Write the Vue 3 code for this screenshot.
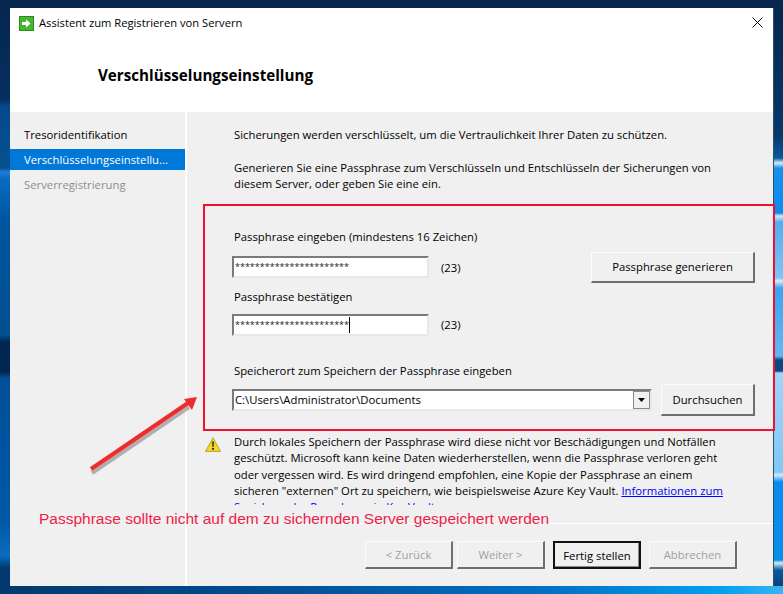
<script setup>
const steps = [
  { label: 'Tresoridentifikation', state: 'done' },
  { label: 'Verschlüsselungseinstellu...', state: 'active' },
  { label: 'Serverregistrierung', state: 'off' }
]
</script>

<template>
  <div class="desktop">
    <div class="window">
      <header class="head">
        <div class="titlebar">
          <svg class="appicon" width="15" height="15" viewBox="0 0 15 15">
            <rect x="0.5" y="0.5" width="14" height="14" fill="#46b52f" stroke="#2b8a1d" />
            <path d="M3 6h4V3.5L11.5 7.5 7 11.5V9H3z" fill="#fff" />
          </svg>
          <span class="title">Assistent zum Registrieren von Servern</span>
          <svg class="close" width="11" height="11" viewBox="0 0 11 11">
            <path d="M0.5 0.5L10.5 10.5M10.5 0.5L0.5 10.5" stroke="#000" stroke-width="1" fill="none" />
          </svg>
        </div>
        <h1 class="heading">Verschlüsselungseinstellung</h1>
      </header>

      <div class="body">
        <nav class="side">
          <div v-for="s in steps" :key="s.label" class="step" :class="s.state">{{ s.label }}</div>
        </nav>

        <main class="main">
          <div class="content">
            <p class="p1">Sicherungen werden verschlüsselt, um die Vertraulichkeit Ihrer Daten zu schützen.</p>
            <p class="p2">Generieren Sie eine Passphrase zum Verschlüsseln und Entschlüsseln der Sicherungen von diesem Server, oder geben Sie eine ein.</p>

            <div class="label l1">Passphrase eingeben (mindestens 16 Zeichen)</div>
            <div class="row r1">
              <div class="field pw"><span class="stars">***********************</span></div>
              <span class="count">(23)</span>
              <button class="btn gen">Passphrase generieren</button>
            </div>
            <div class="label l2">Passphrase bestätigen</div>
            <div class="row r2">
              <div class="field pw"><span class="stars">***********************</span><i class="caret"></i></div>
              <span class="count up">(23)</span>
            </div>
            <div class="label l3">Speicherort zum Speichern der Passphrase eingeben</div>
            <div class="row r3">
              <div class="field path">
                <span class="val">C:\Users\Administrator\Documents</span>
                <span class="drop"><svg width="7" height="4" viewBox="0 0 7 4"><path d="M0 0h7L3.5 4z" fill="#000" /></svg></span>
              </div>
              <button class="btn browse">Durchsuchen</button>
            </div>

            <div class="warn">
              <svg class="warnicon" width="16" height="15" viewBox="0 0 16 15">
                <path d="M8 0.7L15.5 14.4H0.5z" fill="#f4d81f" stroke="#a8931a" stroke-width="0.8" />
                <path d="M7.1 4.5h1.8L8.5 10h-1z M7.1 11h1.8v1.8H7.1z" fill="#222" />
              </svg>
              <p class="warntext">Durch lokales Speichern der Passphrase wird diese nicht vor Beschädigungen und Notfällen geschützt. Microsoft kann keine Daten wiederherstellen, wenn die Passphrase verloren geht oder vergessen wird. Es wird dringend empfohlen, eine Kopie der Passphrase an einem sicheren "externen" Ort zu speichern, wie beispielsweise Azure Key Vault. <a class="link">Informationen zum Speichern der Passphrase in Key Vault</a></p>
            </div>
          </div>

          <footer class="foot">
            <button class="btn nav dis">&lt; Zurück</button>
            <button class="btn nav dis">Weiter &gt;</button>
            <button class="btn nav def">Fertig stellen</button>
            <button class="btn nav dis">Abbrechen</button>
          </footer>
        </main>
      </div>

      <div class="redbox"></div>
      <svg class="arrow" width="120" height="90" viewBox="0 0 120 90">
        <path d="M3 82L100 16" stroke="#6b5b5b" stroke-opacity="0.45" stroke-width="4" transform="translate(1 2)" />
        <path d="M3 80L100 14" stroke="#f02b2b" stroke-width="4" />
        <path d="M109 8L104 21 96 10z" fill="#f02b2b" />
      </svg>
      <div class="note">Passphrase sollte nicht auf dem zu sichernden Server gespeichert werden</div>
    </div>
  </div>
</template>

<style>
html, body { margin: 0; padding: 0; }
</style>

<style scoped>
.desktop {
  width: 783px;
  height: 594px;
  box-sizing: border-box;
  padding: 8px 10px;
  overflow: hidden;
  background-color: #06264f;
  background-image:
    linear-gradient(90deg, #01396f 0, #014e92 35%, #0370c4 70%, #00a0f0 92%, #3ab4f0 100%),
    linear-gradient(180deg, #06264f 0, #052f60 100px, #054a8a 106px, #05508f 168px, #1a80d8 172px, #0a6cc0 178px, #0055a0 220px, #00508f 335px, #02264f 342px, #02264f 372px, #004f98 378px, #0058a6 520px, #0a6cc0 556px, #01396f 568px, #01396f 594px),
    linear-gradient(180deg, #06264f 0, #063968 135px, #0a5a9c 158px, #d6ecfa 163px, #1a90e8 168px, #0a8cf0 213px, #d6ecfa 216px, #50b0f0 222px, #80c4f4 278px, #d6ecfa 281px, #3aa4ee 288px, #60b8f4 356px, #0a4a80 360px, #0a4a80 371px, #a0d4f8 373px, #80c8f6 472px, #d6ecfa 475px, #0a8cf0 482px, #0890e8 560px, #d6ecfa 563px, #0a5a9c 570px, #01396f 594px);
  background-size: 100% 8px, 10px 100%, 10px 100%;
  background-position: left bottom, left top, right top;
  background-repeat: no-repeat;
  font-family: "Open Sans", "Noto Sans", sans-serif;
  font-size: 11.3px;
  color: #000;
}
.window {
  position: relative;
  width: 763px;
  height: 578px;
  background: #f0f0f0;
  display: flex;
  flex-direction: column;
  box-shadow: 1px 0 0 #2f4c6c;
}
.head {
  height: 104px;
  background: #fff;
  flex: none;
}
.titlebar {
  height: 30px;
  display: flex;
  align-items: center;
  padding: 0 10px 0 9px;
}
.appicon { flex: none; margin-right: 5px; }
.title { font-size: 11.2px; padding-bottom: 1px; }
.close { margin-left: auto; margin-top: -1px; }
.heading {
  margin: 0;
  padding: 27px 0 0 88px;
  font-size: 15.2px;
  font-weight: 700;
  line-height: 20px;
}
.body { flex: 1; display: flex; min-height: 0; }
.side {
  width: 175px;
  flex: none;
  padding-top: 12px;
  border-right: 2px solid #fff;
  display: flex;
  flex-direction: column;
  gap: 4px;
}
.step {
  height: 21px;
  line-height: 21px;
  padding-left: 14px;
}
.step.active { background: #0078d7; color: #fff; }
.step.off { color: #8d8d8d; }
.main { flex: 1; display: flex; flex-direction: column; min-width: 0; }
.content { flex: 1; padding: 14px 18px 0 47px; min-height: 0; overflow: hidden; }
p { margin: 0; }
.p1 { line-height: 17px; }
.p2 { line-height: 16px; margin-top: 17px; width: 500px; }
.label { line-height: 16px; }
.l1 { margin-top: 37px; }
.l2 { margin-top: 5px; }
.l3 { margin-top: 27px; }
.row { display: flex; align-items: center; margin-left: -2px; }
.r1 { margin-top: 5px; height: 34px; }
.r2 { margin-top: 9px; height: 22px; }
.r3 { margin-top: 5px; height: 32px; }
.field {
  box-sizing: border-box;
  height: 22px;
  background: #fff;
  border: 2px solid;
  border-color: #7a7a7a #e8e8e8 #e8e8e8 #7a7a7a;
  display: flex;
  align-items: center;
  padding-left: 1px;
}
.pw { width: 197px; }
.stars { font-size: 9px; line-height: 16px; color: #222; }
.caret { width: 1px; height: 16px; background: #000; }
.count { margin-left: 12px; }
.up { padding-bottom: 2px; }
.btn {
  box-sizing: border-box;
  font: inherit;
  color: #000;
  background: #f0f0f0;
  border-style: solid;
  border-color: #fbfbfb #6e6e6e #6e6e6e #fbfbfb;
  border-width: 1px 2px 2px 1px;
  padding: 0;
}
.gen { width: 164px; height: 31px; margin-left: auto; }
.path { width: 420px; padding-right: 0; }
.val { flex: 1; padding-bottom: 2px; }
.drop {
  width: 17px;
  height: 18px;
  box-sizing: border-box;
  background: #f0f0f0;
  border: 1px solid #8a8a8a;
  display: flex;
  align-items: center;
  justify-content: center;
}
.browse { width: 94px; height: 32px; margin-left: auto; }
.warn { display: flex; margin-top: 18px; margin-left: -29px; }
.warnicon { flex: none; margin: 3px 13px 0 0; }
.warntext { line-height: 16.33px; width: 494px; height: 71px; overflow: hidden; }
.link { color: #0000ff; text-decoration: underline; }
.foot {
  height: 63px;
  flex: none;
  box-sizing: border-box;
  border-top: 1px solid #fff;
  display: flex;
  justify-content: flex-end;
  align-items: flex-start;
  padding: 17px 36px 0 0;
  gap: 4px;
}
.nav { width: 88px; height: 28px; }
.dis { color: #a0a0a0; }
.def { border: 2px solid #111; margin: 0 4px; box-shadow: inset -1px -1px 0 #888; }
.redbox {
  position: absolute;
  left: 193px;
  top: 196px;
  width: 572px;
  height: 227px;
  box-sizing: border-box;
  border: 2px solid #ee1133;
}
.arrow { position: absolute; left: 78px; top: 381px; }
.note {
  position: absolute;
  left: 29px;
  top: 501px;
  font-family: "Liberation Sans", sans-serif;
  font-size: 15.5px;
  line-height: 20px;
  color: #ee2247;
}
</style>
